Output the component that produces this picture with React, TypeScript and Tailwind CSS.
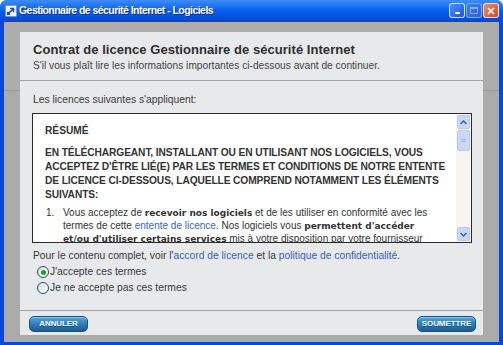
import React from 'react';

const Radio = ({ checked }: { checked?: boolean }) => (
  <span className="w-[12px] h-[12px] rounded-full border border-[#1c5180] bg-gradient-to-br from-[#dcdcd7] to-white flex items-center justify-center shrink-0">
    {checked && <span className="w-[5px] h-[5px] rounded-full bg-[#21a121]" />}
  </span>
);

const XpButton = ({ label }: { label: string }) => (
  <button className="h-[16px] w-[59px] rounded-[5px] border border-[#1b4f7e] bg-gradient-to-b from-[#5aa6dc] via-[#2f7dbb] to-[#1b5c93] text-white font-bold text-[8px] tracking-[-0.1px] leading-none shadow-[inset_0_1px_0_rgba(255,255,255,0.35)] [text-shadow:0_1px_0_#154a78]">
    {label}
  </button>
);

const App: React.FC = () => {
  const verdanaBold = 'font-["DejaVu_Sans",Verdana,sans-serif] font-bold text-[9px] leading-[9px]';
  return (
    <div className="w-[503px] h-[345px] bg-white overflow-hidden" style={{ fontFamily: '"Liberation Sans", Arial, sans-serif' }}>
      <div className="w-full h-full flex flex-col rounded-t-[7px] overflow-hidden bg-[#0a47d6]">
        {/* Title bar */}
        <div className="h-[22px] shrink-0 flex items-center bg-gradient-to-b from-[#3d8cf6] via-[#0560f0] to-[#0549d4] border-b border-[#25477a] pl-[5px] pr-[4px]">
          <svg width="12" height="12" viewBox="0 0 12 12" className="shrink-0">
            <rect x="0.5" y="0.5" width="11" height="11" rx="1" fill="#f4f6fb" stroke="#7a93c9" />
            <path d="M3 9 L8 4 M5 3.5 H8.5 V7" stroke="#1d4fc2" strokeWidth="1.6" fill="none" />
            <rect x="2" y="7" width="3" height="3" fill="#1d4fc2" />
          </svg>
          <span className="ml-[2px] text-white font-bold text-[10.5px] tracking-[-0.55px] [text-shadow:1px_1px_0_#0a2a8a]">
            Gestionnaire de sécurité Internet - Logiciels
          </span>
          <div className="ml-auto flex gap-[1px] items-center">
            <div className="w-[16px] h-[15px] rounded-[3px] border border-white/80 bg-gradient-to-br from-[#4f8ff5] to-[#1c55e0] flex items-end justify-center pb-[3px]">
              <div className="w-[5px] h-[2px] bg-white" />
            </div>
            <div className="w-[16px] h-[15px] rounded-[3px] border border-white/40 bg-gradient-to-br from-[#3f7ef0] to-[#2a60dc] flex items-center justify-center">
              <div className="w-[8px] h-[7px] border border-white/40 border-t-2" />
            </div>
            <div className="w-[16px] h-[15px] rounded-[3px] border border-white/80 bg-gradient-to-br from-[#e88c6b] to-[#d24a1c] flex items-center justify-center">
              <svg width="8" height="8" viewBox="0 0 8 8">
                <path d="M1 1 L7 7 M7 1 L1 7" stroke="white" strokeWidth="1.6" />
              </svg>
            </div>
          </div>
        </div>

        {/* Window body */}
        <div className="flex-1 mx-[4px] mb-[3px] bg-[linear-gradient(to_bottom,#adadad_0,#adadad_68px,#999_68px,#999_69px,#ababab_69px)] px-[16px] pt-[10px] pb-[7px] flex flex-col">
          <div className="flex-1 bg-[#e8e9ea] flex flex-col text-[#3a3a3a]">
            <div className="pl-[13px] pt-[10px] pb-[7px] border-b border-[#a3a3a3]">
              <div className="text-[13px] font-bold leading-[16px] text-[#2f2f2f] tracking-[0.05px]">
                Contrat de licence Gestionnaire de sécurité Internet
              </div>
              <div className="text-[10.2px] leading-[14px] mt-[1px] text-[#444]">
                S'il vous plaît lire les informations importantes ci-dessous avant de continuer.
              </div>
            </div>

            <div className="flex-1 flex flex-col pl-[12px] pr-[11px] pt-[12px]">
              <div className="pl-[1px] text-[10.3px] leading-[14px]">Les licences suivantes s'appliquent:</div>
              <div className="mt-[6px] h-[130px] border border-[#2a2a2a] bg-white flex overflow-hidden">
                <div className="flex-1 pl-[12px] pr-[2px] pt-[10px] text-[10px] leading-[14px] text-[#333]">
                  <p className="font-bold text-[10.2px]">RÉSUMÉ</p>
                  <p className="font-bold mt-[8px] text-[10.2px] tracking-[-0.1px]">
                    EN TÉLÉCHARGEANT, INSTALLANT OU EN UTILISANT NOS LOGICIELS, VOUS ACCEPTEZ D'ÊTRE LIÉ(E) PAR LES TERMES ET CONDITIONS DE NOTRE ENTENTE DE LICENCE CI-DESSOUS, LAQUELLE COMPREND NOTAMMENT LES ÉLÉMENTS SUIVANTS:
                  </p>
                  <div className="flex mt-[4px] leading-[13px]">
                    <span className="w-[18px] shrink-0 pl-[1px]">1.</span>
                    <p className="pr-[20px]">
                      Vous acceptez de <b className={verdanaBold}>recevoir nos logiciels</b> et de les utiliser en conformité avec les termes de cette{' '}
                      <span className="text-[#3b5fc7]">entente de licence</span>. Nos logiciels vous{' '}
                      <b className={verdanaBold}>permettent d'accéder et/ou d'utiliser certains services</b> mis à votre disposition par votre fournisseur
                    </p>
                  </div>
                </div>
                {/* scrollbar */}
                <div className="w-[15px] shrink-0 bg-[#f6f5f0] flex flex-col">
                  <div className="h-[14px] mx-[1px] mt-[1px] rounded-[2px] border border-[#b9cbf3] bg-[#c7d7fb] flex items-center justify-center">
                    <svg width="7" height="5" viewBox="0 0 7 5"><path d="M0.5 4 L3.5 1 L6.5 4" stroke="#4d6185" strokeWidth="1.5" fill="none" /></svg>
                  </div>
                  <div className="h-[21px] mx-[1px] mt-[1px] rounded-[2px] border border-[#b9cbf3] bg-[#c9d8fb] flex flex-col items-center justify-center gap-[1px]">
                    <div className="w-[5px] h-[1px] bg-[#9fb5e6]" />
                    <div className="w-[5px] h-[1px] bg-[#9fb5e6]" />
                  </div>
                  <div className="flex-1" />
                  <div className="h-[14px] mx-[1px] mb-[1px] rounded-[2px] border border-[#b9cbf3] bg-[#c7d7fb] flex items-center justify-center">
                    <svg width="7" height="5" viewBox="0 0 7 5"><path d="M0.5 1 L3.5 4 L6.5 1" stroke="#4d6185" strokeWidth="1.5" fill="none" /></svg>
                  </div>
                </div>
              </div>

              <div className="mt-[6px] pl-[1px] text-[10.3px] leading-[14px]">
                Pour le contenu complet, voir l'<span className="text-[#3b5fc7]">accord de licence</span> et la{' '}
                <span className="text-[#3b5fc7]">politique de confidentialité</span>.
              </div>
              <div className="mt-[1px] pl-[5px] flex flex-col text-[10.3px]">
                <label className="h-[16px] flex items-center gap-[1px]">
                  <Radio checked />
                  <span>J'accepte ces termes</span>
                </label>
                <label className="h-[16px] flex items-center gap-[1px]">
                  <Radio />
                  <span>Je ne accepte pas ces termes</span>
                </label>
              </div>
            </div>

            <div className="h-[25px] shrink-0 border-t border-[#a3a3a3] flex items-start justify-between pl-[9px] pr-[7px] pt-[5px]">
              <XpButton label="ANNULER" />
              <XpButton label="SOUMETTRE" />
            </div>
          </div>
        </div>
      </div>
    </div>
  );
};

export default App;
